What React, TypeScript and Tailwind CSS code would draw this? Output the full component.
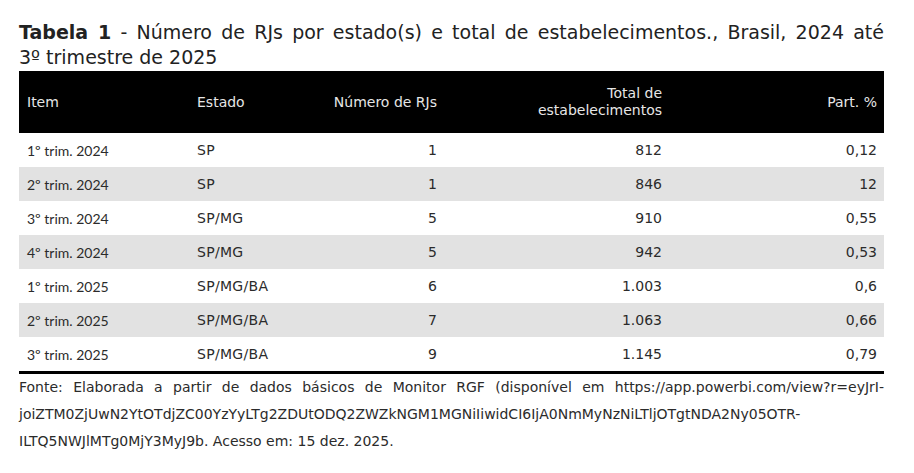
const rows = [
  { item: "1º trim. 2024", estado: "SP", rjs: "1", total: "812", part: "0,12" },
  { item: "2º trim. 2024", estado: "SP", rjs: "1", total: "846", part: "12" },
  { item: "3º trim. 2024", estado: "SP/MG", rjs: "5", total: "910", part: "0,55" },
  { item: "4º trim. 2024", estado: "SP/MG", rjs: "5", total: "942", part: "0,53" },
  { item: "1º trim. 2025", estado: "SP/MG/BA", rjs: "6", total: "1.003", part: "0,6" },
  { item: "2º trim. 2025", estado: "SP/MG/BA", rjs: "7", total: "1.063", part: "0,66" },
  { item: "3º trim. 2025", estado: "SP/MG/BA", rjs: "9", total: "1.145", part: "0,79" },
];

const cols = "grid grid-cols-[170px_126px_130px_225px_214px] items-center";

export default function App() {
  return (
    <div className="w-[914px] h-[473px] bg-white pl-[19px] pt-[20px] text-[#2b2b2b] font-['DejaVu_Sans',sans-serif]">
      <div className="w-[865px]">
        {/* título */}
        <div className="text-[19px] leading-[25px] text-[#222]">
          <div className="text-justify [text-align-last:justify] whitespace-nowrap">
            <span className="font-bold">Tabela 1</span> - Número de RJs por estado(s) e total de estabelecimentos., Brasil, 2024 até
          </div>
          <div>3º trimestre de 2025</div>
        </div>

        {/* tabela */}
        <div className="mt-[1px]">
          <div className={`${cols} h-[62px] bg-black text-[#e6e6e6] text-[14px] leading-[17px]`}>
            <div className="pl-2">Item</div>
            <div className="pl-2">Estado</div>
            <div className="pr-2 text-right">Número de RJs</div>
            <div className="pr-2 text-right">
              Total de
              <br />
              estabelecimentos
            </div>
            <div className="pr-[7px] text-right">Part. %</div>
          </div>

          {rows.map((r, i) => (
            <div
              key={r.item}
              className={`${cols} h-[34px] text-[14px] ${i % 2 === 1 ? "bg-[#e2e2e2]" : "bg-white"}`}
            >
              <div className="pl-2 font-['Lato',sans-serif]">{r.item}</div>
              <div className="pl-2 tracking-[0.3px]">{r.estado}</div>
              <div className="pr-2 text-right">{r.rjs}</div>
              <div className="pr-2 text-right">{r.total}</div>
              <div className="pr-[7px] text-right">{r.part}</div>
            </div>
          ))}
          <div className="h-[3px] bg-black" />
        </div>

        {/* fonte */}
        <div className="text-[14px] leading-[27px] text-[#2b2b2b]">
          <div className="text-justify [text-align-last:justify]">
            Fonte: Elaborada a partir de dados básicos de Monitor RGF (disponível em https://app.powerbi.com/view?r=eyJrI-
          </div>
          <div>joiZTM0ZjUwN2YtOTdjZC00YzYyLTg2ZDUtODQ2ZWZkNGM1MGNiIiwidCI6IjA0NmMyNzNiLTljOTgtNDA2Ny05OTR-</div>
          <div>ILTQ5NWJlMTg0MjY3MyJ9b. Acesso em: 15 dez. 2025.</div>
        </div>
      </div>
    </div>
  );
}
